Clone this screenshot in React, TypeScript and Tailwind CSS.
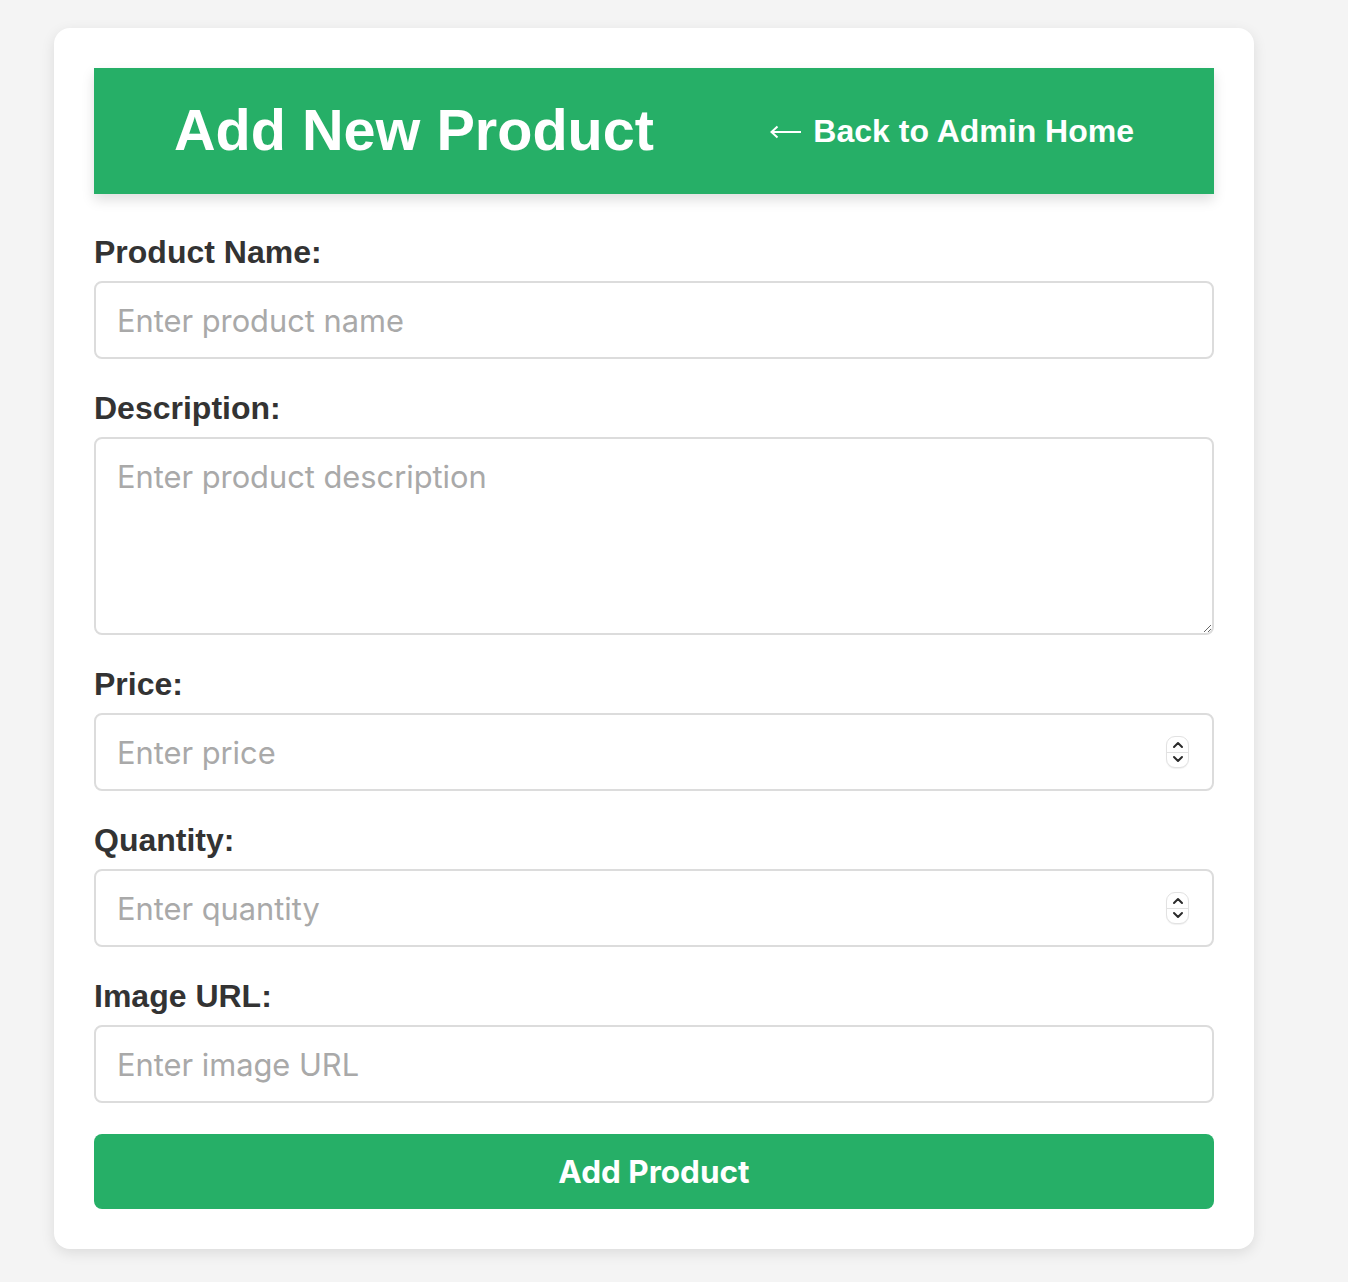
import React from "react";

const labelCls =
  "block text-[32px] leading-[36px] font-bold text-[#333] mb-[11px] [font-family:'Liberation_Sans',Arial,sans-serif]";
const inputCls =
  "block w-full h-[78px] rounded-[8px] border-2 border-[#dcdcdc] bg-white px-[21px] text-[30.8px] text-[#333] placeholder:text-[#a9a9a9] outline-none [font-family:Inter,'Noto_Sans',sans-serif]";

function Spinner() {
  return (
    <div className="pointer-events-none absolute right-[25px] top-1/2 -translate-y-1/2 w-[23px] h-[32px] rounded-[9px] border border-[#e2e2e2] bg-white flex flex-col items-center justify-between shadow-[0_1px_1px_rgba(0,0,0,0.06)]">
      <svg width="14" height="14" viewBox="0 0 14 14" className="mt-[1px]">
        <path d="M3 9 L7 5 L11 9" fill="none" stroke="#2b2b2b" strokeWidth="2" strokeLinecap="round" strokeLinejoin="round" />
      </svg>
      <div className="absolute left-0 right-0 top-1/2 h-px bg-[#e2e2e2]" />
      <svg width="14" height="14" viewBox="0 0 14 14" className="mb-[1px]">
        <path d="M3 5 L7 9 L11 5" fill="none" stroke="#2b2b2b" strokeWidth="2" strokeLinecap="round" strokeLinejoin="round" />
      </svg>
    </div>
  );
}

function NumberField({ placeholder }: { placeholder: string }) {
  return (
    <div className="relative">
      <input
        type="number"
        placeholder={placeholder}
        className={
          inputCls +
          " [appearance:textfield] [&::-webkit-inner-spin-button]:appearance-none [&::-webkit-outer-spin-button]:appearance-none"
        }
      />
      <Spinner />
    </div>
  );
}

export default function App() {
  return (
    <div className="min-h-screen bg-[#f4f4f4] pt-[28px] pb-[32px] pl-[54px]">
      <div className="w-[1200px] bg-white rounded-[16px] shadow-[0_4px_14px_rgba(0,0,0,0.1)] p-[40px]">
        <div className="h-[126px] bg-[#26af67] flex items-center justify-between px-[80px] shadow-[0_6px_12px_rgba(0,0,0,0.13)] mb-[40px] [font-family:'Liberation_Sans',Arial,sans-serif]">
          <h1 className="text-[57.6px] font-bold text-white leading-none">Add New Product</h1>
          <a href="#" className="flex items-center text-[32px] font-bold text-white leading-none">
            <svg width="32" height="14" viewBox="0 0 32 14" className="mr-[11px] mt-[2px]">
              <path d="M1.5 7 H31" stroke="white" strokeWidth="2" fill="none" />
              <path d="M7.5 1.5 L1.5 7 L7.5 12.5" stroke="white" strokeWidth="2" fill="none" strokeLinejoin="miter" />
            </svg>
            <span>Back to Admin Home</span>
          </a>
        </div>
        <form>
          <div className="mb-[31px]">
            <label className={labelCls}>Product Name:</label>
            <input type="text" placeholder="Enter product name" className={inputCls} />
          </div>
          <div className="mb-[31px]">
            <label className={labelCls}>Description:</label>
            <textarea
              placeholder="Enter product description"
              className="block w-full h-[198px] rounded-[8px] border-2 border-[#dcdcdc] bg-white px-[21px] py-[18px] text-[30.8px] leading-[40px] text-[#333] placeholder:text-[#a9a9a9] outline-none [font-family:Inter,'Noto_Sans',sans-serif]"
            />
          </div>
          <div className="mb-[31px]">
            <label className={labelCls}>Price:</label>
            <NumberField placeholder="Enter price" />
          </div>
          <div className="mb-[31px]">
            <label className={labelCls}>Quantity:</label>
            <NumberField placeholder="Enter quantity" />
          </div>
          <div className="mb-[31px]">
            <label className={labelCls}>Image URL:</label>
            <input type="text" placeholder="Enter image URL" className={inputCls} />
          </div>
          <button
            type="button"
            className="block w-full h-[75px] rounded-[8px] bg-[#26af67] text-white text-[31.5px] font-bold [font-family:Inter,'Noto_Sans',sans-serif]"
          >
            Add Product
          </button>
        </form>
      </div>
    </div>
  );
}
